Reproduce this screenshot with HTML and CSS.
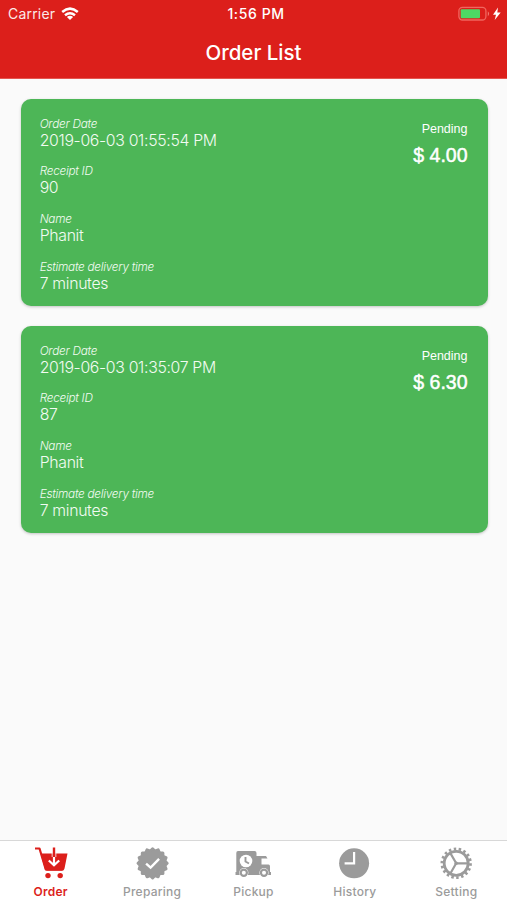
FILE: index.html
```html
<!DOCTYPE html>
<html lang="en">
<head>
<meta charset="utf-8">
<title>Order List</title>
<link rel="stylesheet" href="styles.css">
</head>
<body>
<header class="header">
  <div class="status">
    <div class="carrier"><span>Carrier</span>
      <svg width="18" height="14" viewBox="0 0 18 14" fill="none" stroke="#fff" stroke-width="2.5"><path d="M1.2 5Q9-1.700 16.800 5M4 8.200Q9 4.200 14 8.200"/><path d="M9 13L5.900 10Q9 7.500 12.100 10Z" fill="#fff" stroke="none"/></svg>
    </div>
    <div class="time">1:56 PM</div>
    <div class="power">
      <svg width="44" height="16" viewBox="0 0 44 16"><rect x=".9" y="1.400" width="27" height="12.600" rx="3.500" fill="none" stroke="#f0665f" stroke-width="1.300"/><rect x="2.700" y="3.200" width="19.300" height="9" rx="1" fill="#4cd964"/><path d="M29.800 5.200Q32.500 7.700 29.800 10.200Z" fill="#f0766f"/><path d="M40 1.500L35 8.700H38L36.700 14L42.700 6.500H39.300Z" fill="#fff"/></svg>
    </div>
  </div>
  <h1 class="title">Order List</h1>
</header>
<main class="orders">
  <article class="card">
    <dl class="details">
      <div class="field"><dt>Order Date</dt><dd>2019-06-03 01:55:54 PM</dd></div>
      <div class="field"><dt>Receipt ID</dt><dd>90</dd></div>
      <div class="field"><dt>Name</dt><dd>Phanit</dd></div>
      <div class="field"><dt>Estimate delivery time</dt><dd>7 minutes</dd></div>
    </dl>
    <div class="summary"><div class="state">Pending</div><div class="price">$ 4.00</div></div>
  </article>
  <article class="card">
    <dl class="details">
      <div class="field"><dt>Order Date</dt><dd>2019-06-03 01:35:07 PM</dd></div>
      <div class="field"><dt>Receipt ID</dt><dd>87</dd></div>
      <div class="field"><dt>Name</dt><dd>Phanit</dd></div>
      <div class="field"><dt>Estimate delivery time</dt><dd>7 minutes</dd></div>
    </dl>
    <div class="summary"><div class="state">Pending</div><div class="price">$ 6.30</div></div>
  </article>
</main>
<nav class="tabs">
  <a class="tab active">
    <svg class="icon" viewBox="33 846 36 34"><path d="M35 848.500H39.500L45.800 869.500H62.500" fill="none" stroke="currentColor" stroke-width="2.200" stroke-linejoin="round"/><path d="M40.500 853.500H67.500L64.500 868.500Q64 870.700 62 870.700H47Q45.300 870.700 44.900 869Z" fill="currentColor"/><path d="M54 851V865M48.800 860.500L54 865.300L59.200 860.500" fill="none" stroke="#fff" stroke-width="2.200"/><path d="M52.200 852.500V857M55.800 852.500V857" stroke="#fff" stroke-width=".9"/><path d="M54 847.500V857" stroke="currentColor" stroke-width="2.400"/><circle cx="48" cy="875.600" r="2.700" fill="currentColor"/><circle cx="60.200" cy="875.600" r="2.700" fill="currentColor"/></svg>
    <span>Order</span>
  </a>
  <a class="tab">
    <svg class="icon" viewBox="-18 -17.300 36 34" fill="currentColor"><g transform="translate(.6 0)"><rect x="-11.800" y="-11.800" width="23.600" height="23.600" rx="1.500"/><rect x="-11.800" y="-11.800" width="23.600" height="23.600" rx="1.500" transform="rotate(22.500)"/><rect x="-11.800" y="-11.800" width="23.600" height="23.600" rx="1.500" transform="rotate(45)"/><rect x="-11.800" y="-11.800" width="23.600" height="23.600" rx="1.500" transform="rotate(67.500)"/><path d="M-6.500 .3L-2 4.300L6.500-4.500" fill="none" stroke="#fff" stroke-width="2.400"/></g></svg>
    <span>Preparing</span>
  </a>
  <a class="tab">
    <svg class="icon" viewBox="235.500 846 36 34"><path d="M238.500 851H255Q257 851 257 853V856H266.500L268 858.500H262V864.500H269Q270.500 864.500 270.500 866.500V872H271.500V875H236V872H236.800V853Q236.800 851 238.500 851Z" fill="currentColor"/><circle cx="246.500" cy="861" r="6.300" fill="#fff"/><path d="M246 857V861.500L249.500 863.500" fill="none" stroke="currentColor" stroke-width="1.900"/><g fill="#fff"><circle cx="244.300" cy="872.700" r="4.600"/><circle cx="264.500" cy="872.700" r="4.600"/></g><g fill="#fff" stroke="currentColor" stroke-width="2.200"><circle cx="244.300" cy="872.700" r="3.100"/><circle cx="264.500" cy="872.700" r="3.100"/></g></svg>
    <span>Pickup</span>
  </a>
  <a class="tab">
    <svg class="icon" viewBox="336.900 846 36 34"><circle cx="354" cy="863.300" r="15" fill="currentColor"/><path d="M354 852V863.300H344.500" fill="none" stroke="#fff" stroke-width="2.200"/></svg>
    <span>History</span>
  </a>
  <a class="tab">
    <svg class="icon" viewBox="-18.200 -17.300 36 34" fill="none" stroke="currentColor"><circle r="12" stroke-width="2.800"/><circle r="14.300" stroke-width="2.800" pathLength="36" stroke-dasharray="1 1"/><path d="M0 0H12M0 0L-6-10.400M0 0L-6 10.400" stroke-width="2.200"/><circle r="1.800" fill="currentColor" stroke="none"/></svg>
    <span>Setting</span>
  </a>
</nav>
</body>
</html>
```

FILE: styles.css
```css
* { box-sizing: border-box; }
body {
  margin: 0;
  height: 900px;
  display: flex;
  flex-direction: column;
  background: #fafafa;
  font-family: Inter, "Liberation Sans", sans-serif;
}
.header {
  height: 79px;
  background: #dc1f1b;
  border-bottom: 1px solid #e4564f;
  color: #fff;
}
.status {
  height: 27px;
  display: grid;
  grid-template-columns: 1fr auto 1fr;
  align-items: center;
  padding: 0 5px 0 8px;
  font-size: 14px;
}
.carrier { display: flex; align-items: center; gap: 6px; letter-spacing: .2px; }
.carrier span { opacity: .9; }
.time { padding-left: 2px; font-size: 14px; font-weight: 500; letter-spacing: .6px; }
.power { display: flex; justify-content: flex-end; }
.title { margin: 0; text-align: center; font-size: 20.500px; line-height: 51px; font-weight: 500; }
.orders { flex: 1; display: flex; flex-direction: column; gap: 19.800px; padding: 19.500px 19.500px 0 20.500px; }
.card {
  height: 207.400px;
  display: flex;
  justify-content: space-between;
  padding: 18px 20px 18px 19.200px;
  border-radius: 10px;
  background: #4db657;
  box-shadow: 0 1px 3px rgba(0, 0, 0, .22);
  color: #fff;
  font-family: "Liberation Sans", sans-serif;
}
.details {
  display: flex;
  flex-direction: column;
  gap: 14.700px;
  margin: 0;
  font-family: Inter, "Liberation Sans", sans-serif;
  font-weight: 300;
}
.field { height: 33px; color: #f2fbf2; }
.field dt { font-size: 11.800px; line-height: 14px; font-style: italic; letter-spacing: -.27px; }
.field dd { margin: 0; font-size: 15.800px; line-height: 19px; letter-spacing: -.32px; }
.summary { text-align: right; padding-top: 4.500px; }
.state { font-size: 12.500px; line-height: 16px; }
.price { margin-top: 7px; font-size: 19.500px; line-height: 22px; -webkit-text-stroke: .5px #fff; }
.tabs {
  height: 60px;
  display: grid;
  grid-template-columns: repeat(5, 1fr);
  background: #fff;
  border-top: 1px solid #d8d8d8;
}
.tab {
  display: flex;
  flex-direction: column;
  align-items: center;
  padding-top: 5px;
  color: #9b9b9b;
  font-size: 12px;
  line-height: 16px;
  font-weight: 500;
  letter-spacing: .25px;
}
.tab span { margin-top: 4px; }
.icon { width: 36px; height: 34px; overflow: visible; }
.active { color: #dc1f1b; font-weight: 600; }
```
